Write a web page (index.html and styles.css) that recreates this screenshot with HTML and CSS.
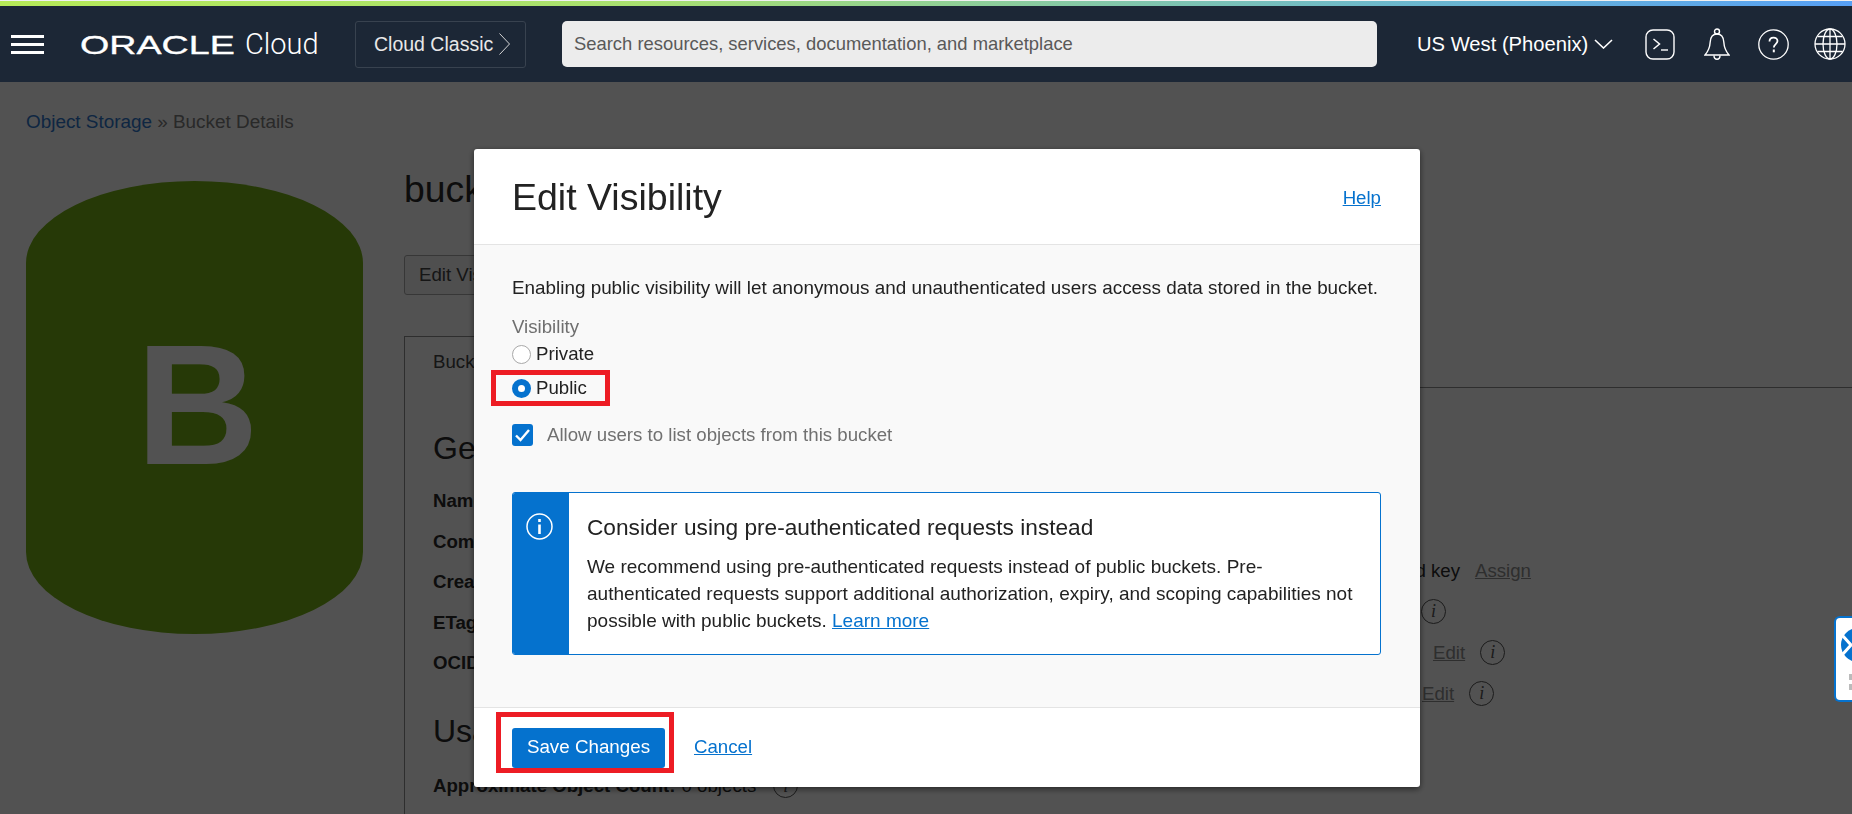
FILE: index.html
```html
<!DOCTYPE html>
<html lang="en">
<head>
    <meta charset="UTF-8">
    <meta name="viewport" content="width=device-width, initial-scale=1.0">
    <title>Edit Visibility - Bucket Details</title>
    <link rel="stylesheet" href="styles.css">
</head>
<body>
    <div class="top-strip"></div>
    <header class="navbar">
        <svg class="burger" width="33" height="19" viewBox="0 0 33 19"><path d="M0 1.5h33M0 9.5h33M0 17.5h33" stroke="#fff" stroke-width="3"/></svg>
        <span class="logo-oracle">ORACLE</span>
        <span class="logo-cloud">Cloud</span>
        <button class="classic-btn">Cloud Classic
            <svg width="13" height="24" viewBox="0 0 13 24"><path d="M1.5 1.5L11.5 12L1.5 22.5" fill="none" stroke="#d5d5d5" stroke-width="1"/></svg>
        </button>
        <input class="search" type="text" placeholder="Search resources, services, documentation, and marketplace">
        <span class="region">US West (Phoenix)</span>
        <svg class="chevron" width="19" height="10" viewBox="0 0 19 10"><path d="M1 1l8.5 8L18 1" fill="none" stroke="#fff" stroke-width="1.6"/></svg>
        <svg class="nav-icon terminal" width="30" height="31" viewBox="0 0 30 31" fill="none" stroke="#fff"><rect x="1" y="1" width="28" height="29" rx="7" stroke-width="1.4"/><path d="M8.5 10l6 5-6 5" stroke-width="1.5"/><path d="M16 21h7" stroke-width="1.4"/></svg>
        <svg class="nav-icon bell" width="26" height="32" viewBox="0 0 26 32" fill="none" stroke="#fff" stroke-width="1.4"><circle cx="13" cy="3.5" r="2.5"/><path d="M13 6c-4.5 0-6.5 3.500-6.800 8-.3 5-1.700 9-5.200 13h24c-3.500-4-4.900-8-5.200-13C19.500 9.500 17.500 6 13 6z"/><path d="M10 27.500c0 5 6 5 6 0"/></svg>
        <svg class="nav-icon help" width="31" height="31" viewBox="0 0 31 31" fill="none" stroke="#fff"><circle cx="15.500" cy="15.500" r="14.700" stroke-width="1.3"/><path d="M11.500 12.500c0-5.200 8-5.200 8-.4 0 3-3.700 3-3.700 6.400" stroke-width="1.800"/><path d="M15.800 20.500v2.800" stroke-width="2"/></svg>
        <svg class="nav-icon globe" width="32" height="32" viewBox="0 0 32 32" fill="none" stroke="#fff" stroke-width="1.3"><circle cx="16" cy="16" r="15"/><ellipse cx="16" cy="16" rx="7" ry="15"/><path d="M16 1v30M1 16h30M3.500 8.500h25M3.500 23.500h25"/></svg>
    </header>

    <main class="page">
        <div class="breadcrumb"><a href="#">Object Storage</a> &raquo; Bucket Details</div>
        <div class="bucket">
            <div class="bucket-icon">B</div>
            <div class="bucket-main">
                <h1 class="bucket-name">bucket-public-demo</h1>
                <button class="plain-btn">Edit Visibility</button>
                <div class="tabs"><span class="tab">Bucket Information</span></div>
                <div class="panel">
                    <div class="panel-left">
                        <h2 class="section-title first">General</h2>
                        <div class="kv"><b>Namespace:</b> demo</div>
                        <div class="kv"><b>Compartment:</b> root</div>
                        <div class="kv"><b>Created:</b> today</div>
                        <div class="kv"><b>ETag:</b> none</div>
                        <div class="kv"><b>OCID:</b> none</div>
                        <h2 class="section-title">Usage</h2>
                        <div class="kv usage"><b>Approximate Object Count:</b> 0 objects <span class="info-dot">i</span></div>
                    </div>
                    <div class="panel-right">
                        <div class="side-row"><span class="side-text end-a">Encryption Key: Oracle managed key</span><a class="muted-link" href="#">Assign</a></div>
                        <div class="side-row"><span class="side-text end-b">Auto Tiering: Disabled</span><span class="info-dot">i</span></div>
                        <div class="side-row"><span class="side-text end-c">Emit Events: Disabled</span><a class="muted-link" href="#">Edit</a><span class="info-dot">i</span></div>
                        <div class="side-row"><span class="side-text end-d">Versioning: Disabled</span><a class="muted-link" href="#">Edit</a><span class="info-dot">i</span></div>
                    </div>
                </div>
            </div>
        </div>
    </main>

    <div class="overlay"></div>

    <div class="help-widget">
        <svg width="18" height="86" viewBox="0 0 18 86"><circle cx="24" cy="29" r="17" fill="#0572ce"/><path d="M8 19l9 10-9 10" fill="none" stroke="#fff" stroke-width="3"/><path d="M15 58h3v6h-3zM15 68h3v6h-3z" fill="#bbb"/></svg>
    </div>

    <section class="dialog">
        <div class="dialog-head">
            <h2 class="dialog-title">Edit Visibility</h2>
            <a class="link" href="#">Help</a>
        </div>
        <div class="dialog-body">
            <p class="intro">Enabling public visibility will let anonymous and unauthenticated users access data stored in the bucket.</p>
            <div class="field-label">Visibility</div>
            <label class="radio-row private"><input type="radio" name="vis">Private</label>
            <label class="radio-row public"><input type="radio" name="vis" checked>Public</label>
            <label class="check-row">
                <span class="check"><svg width="21" height="22" viewBox="0 0 21 22"><path d="M4 11.500l4.500 4.500 8.500-10" fill="none" stroke="#fff" stroke-width="2.400"/></svg></span>
                Allow users to list objects from this bucket
            </label>
            <div class="notice">
                <div class="notice-band">
                    <svg width="27" height="27" viewBox="0 0 27 27" fill="none" stroke="#fff"><circle cx="13.500" cy="13.500" r="12.500" stroke-width="1.500"/><path d="M13.500 6v3M13.500 11.500V21" stroke-width="2.600"/></svg>
                </div>
                <div class="notice-text">
                    <h3 class="notice-title">Consider using pre-authenticated requests instead</h3>
                    <p class="notice-copy">We recommend using pre-authenticated requests instead of public buckets. Pre-authenticated requests support additional authorization, expiry, and scoping capabilities not possible with public buckets. <a class="link" href="#">Learn more</a></p>
                </div>
            </div>
        </div>
        <div class="dialog-foot">
            <button class="save-btn">Save Changes</button>
            <a class="link cancel" href="#">Cancel</a>
        </div>
        <span class="mark mark-public"></span>
        <span class="mark mark-save"></span>
    </section>
</body>
</html>
```

FILE: styles.css
```css
* {
    box-sizing: border-box;
}
html, body {
    height: 814px;
}
body {
    margin: 0;
    overflow: hidden;
    background-color: #fff;
    color: #2b2b2b;
    font-family: "Liberation Sans", Arial, sans-serif;
    font-size: 18.67px;
}

/* top bar */
.top-strip {
    height: 6px;
    border-top: 1px solid #f0f0f0;
    background: linear-gradient(90deg, #b6ea58 0%, #a8e070 35%, #6cb8cc 75%, #57a0f5 100%);
}
.navbar {
    display: flex;
    align-items: center;
    height: 76px;
    padding-left: 11px;
    background-color: #1c2736;
    color: #fff;
}
.burger {
    margin-right: 36px;
}
.logo-oracle {
    display: inline-block;
    width: 154px;
    padding-top: 2px;
    font-size: 26.500px;
    line-height: 30px;
    -webkit-text-stroke: 0.35px #fff;
    transform: scaleX(1.42);
    transform-origin: left center;
}
.logo-cloud {
    width: 110px;
    margin-left: 11px;
    font-family: Roboto, "Liberation Sans", sans-serif;
    font-size: 29px;
    font-weight: 300;
}
.classic-btn {
    display: flex;
    align-items: center;
    gap: 5px;
    width: 171px;
    height: 47px;
    padding: 0 0 0 18px;
    border: 1px solid #38424f;
    border-radius: 3px;
    background: none;
    color: #e8e8e8;
    font: 19.500px "Liberation Sans", Arial, sans-serif;
}
.search {
    width: 815px;
    height: 46px;
    margin-left: 36px;
    padding: 0 12px;
    border: 0;
    border-radius: 5px;
    background-color: #ececec;
    font: 18.400px "Liberation Sans", Arial, sans-serif;
}
.search::placeholder {
    color: #595959;
    opacity: 1;
}
.region {
    margin-left: 40px;
    font-size: 20.200px;
    white-space: nowrap;
}
.chevron {
    margin-left: 6px;
}
.terminal {
    margin-left: 32px;
}
.bell {
    margin-left: 29px;
}
.help {
    margin-left: 28px;
}
.globe {
    margin-left: 25px;
}

/* page behind the dialog */
.page {
    padding: 0 0 0 26px;
}
.breadcrumb {
    height: 99px;
    padding-top: 29px;
    font-size: 18.900px;
    line-height: 22px;
    color: #808080;
}
.breadcrumb a {
    color: #2f78cc;
    text-decoration: none;
}
.bucket {
    display: flex;
    gap: 41px;
}
.bucket-icon {
    display: flex;
    flex: none;
    align-items: center;
    justify-content: center;
    width: 337px;
    height: 453px;
    padding: 0 0 5px 6px;
    border-radius: 50% / 82px;
    background-color: #76b217;
    color: #fff;
    font-size: 170px;
    font-weight: bold;
}
.bucket-main {
    flex: 1;
}
.bucket-name {
    height: 74px;
    margin: 0;
    font-size: 37.330px;
    font-weight: normal;
    line-height: 16px;
}
.plain-btn {
    display: block;
    height: 40px;
    padding: 0 14px;
    border: 1px solid #aaa;
    border-radius: 3px;
    background: #f5f5f5;
    color: #444;
    font: 18.67px "Liberation Sans", Arial, sans-serif;
}
.tabs {
    height: 52px;
    margin-top: 41px;
    border-bottom: 1px solid #8f8f8f;
}
.tab {
    display: block;
    width: 260px;
    height: 52px;
    padding: 14px 0 0 28px;
    border: 1px solid #8f8f8f;
    border-bottom: 0;
    background-color: #fff;
    color: #444;
}
.panel {
    display: flex;
    height: 500px;
    border-left: 1px solid #8f8f8f;
}
.panel-left {
    width: 695px;
    padding: 40px 0 0 28px;
}
.section-title {
    margin: 27px 0 15px;
    font-size: 32px;
    font-weight: normal;
    line-height: 40px;
}
.section-title.first {
    margin-top: 0;
    margin-bottom: 13px;
}
.kv {
    height: 40.500px;
    line-height: 40.500px;
    white-space: nowrap;
}
.usage {
    display: flex;
    align-items: center;
    gap: 6px;
}
.usage .info-dot {
    margin-left: 11px;
}
.panel-right {
    padding-top: 162px;
}
.side-row {
    display: flex;
    align-items: center;
    gap: 15px;
    height: 41px;
}
.side-text {
    text-align: right;
    white-space: nowrap;
}
.end-a {
    width: 360px;
}
.end-b {
    width: 306px;
}
.end-c {
    width: 318px;
}
.end-d {
    width: 307px;
}
.muted-link {
    color: #8f8f8f;
}
.info-dot {
    display: inline-flex;
    align-items: center;
    justify-content: center;
    width: 25px;
    height: 25px;
    border: 1.500px solid #555;
    border-radius: 50%;
    color: #555;
    font-family: "Liberation Serif", serif;
    font-size: 18px;
    font-style: italic;
}

.overlay {
    position: fixed;
    top: 82px;
    right: 0;
    bottom: 0;
    left: 0;
    background-color: rgba(0, 0, 0, 0.68);
}

.help-widget {
    position: fixed;
    top: 616px;
    right: 0;
    width: 18px;
    height: 86px;
    overflow: hidden;
    border: 2.500px solid #0572ce;
    border-right: 0;
    border-radius: 6px 0 0 6px;
    background-color: #fff;
}
.help-widget svg {
    display: block;
    margin: -2.500px 0 0 -2.500px;
}

/* dialog */
.dialog {
    position: fixed;
    top: 149px;
    left: 474px;
    display: flex;
    flex-direction: column;
    width: 946px;
    height: 638px;
    overflow: hidden;
    border-radius: 3px;
    background-color: #fff;
    box-shadow: 0 2px 6px rgba(0, 0, 0, 0.55);
    color: #222;
}
.dialog-head {
    display: flex;
    align-items: center;
    justify-content: space-between;
    height: 96px;
    padding: 2px 39px 0 38px;
    border-bottom: 1px solid #e4e4e4;
}
.dialog-title {
    margin: 0;
    font-size: 37.500px;
    font-weight: normal;
}
.link {
    color: #0572ce;
    text-decoration: underline;
}
.dialog-body {
    flex: 1;
    padding: 0 39px;
    background-color: #f9f9f9;
}
.intro {
    margin: 32px 0 0 -1px;
    font-size: 18.880px;
    line-height: 22px;
    white-space: nowrap;
}
.field-label {
    margin: 17px 0 0 -1px;
    line-height: 22px;
    color: #6f6f6f;
}
.radio-row {
    display: flex;
    align-items: center;
    gap: 5px;
    height: 22px;
    line-height: 22px;
}
.radio-row.private {
    margin-top: 5px;
}
.radio-row.public {
    margin-top: 12px;
}
.radio-row input {
    flex: none;
    width: 19px;
    height: 19px;
    margin: 1px 0 0 -1px;
    border: 1px solid #a9a9a9;
    border-radius: 50%;
    background-color: #fff;
    appearance: none;
}
.radio-row input:checked {
    border: 6.500px solid #0572ce;
}
.check-row {
    display: flex;
    align-items: center;
    gap: 14px;
    height: 22px;
    margin: 25px 0 0 -1px;
    color: #707070;
}
.check {
    flex: none;
    width: 21px;
    height: 22px;
    border-radius: 3px;
    background-color: #0572ce;
}
.check svg {
    display: block;
}
.notice {
    display: flex;
    height: 163px;
    margin: 46px 0 0 -1px;
    overflow: hidden;
    border: 1px solid #0572ce;
    border-radius: 3px;
    background-color: #fff;
}
.notice-band {
    flex: none;
    width: 56px;
    padding: 20px 0 0 13px;
    background-color: #0572ce;
}
.notice-band svg {
    display: block;
}
.notice-text {
    padding: 0 12px 0 18px;
}
.notice-title {
    margin: 21px 0 0;
    font-size: 22.670px;
    font-weight: normal;
    line-height: 27px;
}
.notice-copy {
    margin: 12px 0 0;
    font-size: 19px;
    line-height: 27px;
}
.dialog-foot {
    display: flex;
    align-items: center;
    gap: 29px;
    height: 80px;
    padding: 0 38px;
    border-top: 1px solid #e4e4e4;
}
.save-btn {
    width: 153px;
    height: 40px;
    padding: 0 0 2px;
    border: 0;
    border-radius: 3px;
    background-color: #0572ce;
    color: #fff;
    font: 18.800px "Liberation Sans", Arial, sans-serif;
}
.cancel {
    margin-bottom: 2px;
}

/* red call-outs drawn on the screenshot */
.mark {
    position: absolute;
    border: 5px solid #ed1c24;
}
.mark-public {
    top: 221px;
    left: 17px;
    width: 119px;
    height: 36px;
}
.mark-save {
    top: 563px;
    left: 22px;
    width: 178px;
    height: 61px;
}
```
